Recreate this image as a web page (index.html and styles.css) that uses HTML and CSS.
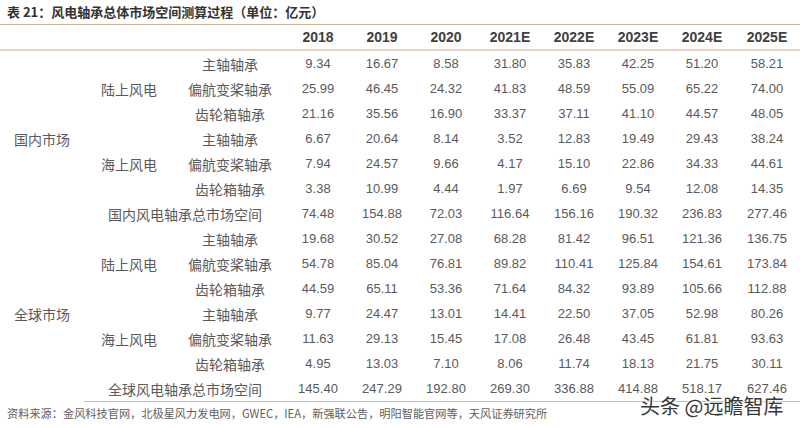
FILE: index.html
```html
<!DOCTYPE html>
<html lang="zh">
<head>
<meta charset="utf-8">
<title>风电轴承总体市场空间测算过程</title>
<link rel="stylesheet" href="styles.css">
</head>
<body>
<div class="page">
  <div class="title">表 21：风电轴承总体市场空间测算过程（单位：亿元）</div>
  <table class="data">
    <colgroup>
      <col class="c-region"><col class="c-type"><col class="c-item">
      <col class="c-num"><col class="c-num"><col class="c-num"><col class="c-num">
      <col class="c-num"><col class="c-num"><col class="c-num"><col class="c-last">
    </colgroup>
    <thead>
      <tr>
        <th></th><th></th><th></th>
        <th>2018</th><th>2019</th><th>2020</th><th>2021E</th><th>2022E</th><th>2023E</th><th>2024E</th><th>2025E</th>
      </tr>
    </thead>
    <tbody>
      <tr>
        <td class="region" rowspan="7">国内市场</td>
        <td class="type" rowspan="3">陆上风电</td>
        <td class="item">主轴轴承</td>
        <td>9.34</td><td>16.67</td><td>8.58</td><td>31.80</td><td>35.83</td><td>42.25</td><td>51.20</td><td>58.21</td>
      </tr>
      <tr>
        <td class="item">偏航变桨轴承</td>
        <td>25.99</td><td>46.45</td><td>24.32</td><td>41.83</td><td>48.59</td><td>55.09</td><td>65.22</td><td>74.00</td>
      </tr>
      <tr>
        <td class="item">齿轮箱轴承</td>
        <td>21.16</td><td>35.56</td><td>16.90</td><td>33.37</td><td>37.11</td><td>41.10</td><td>44.57</td><td>48.05</td>
      </tr>
      <tr>
        <td class="type" rowspan="3">海上风电</td>
        <td class="item">主轴轴承</td>
        <td>6.67</td><td>20.64</td><td>8.14</td><td>3.52</td><td>12.83</td><td>19.49</td><td>29.43</td><td>38.24</td>
      </tr>
      <tr>
        <td class="item">偏航变桨轴承</td>
        <td>7.94</td><td>24.57</td><td>9.66</td><td>4.17</td><td>15.10</td><td>22.86</td><td>34.33</td><td>44.61</td>
      </tr>
      <tr>
        <td class="item">齿轮箱轴承</td>
        <td>3.38</td><td>10.99</td><td>4.44</td><td>1.97</td><td>6.69</td><td>9.54</td><td>12.08</td><td>14.35</td>
      </tr>
      <tr>
        <td class="item" colspan="2">国内风电轴承总市场空间</td>
        <td>74.48</td><td>154.88</td><td>72.03</td><td>116.64</td><td>156.16</td><td>190.32</td><td>236.83</td><td>277.46</td>
      </tr>
      <tr>
        <td class="region" rowspan="7">全球市场</td>
        <td class="type" rowspan="3">陆上风电</td>
        <td class="item">主轴轴承</td>
        <td>19.68</td><td>30.52</td><td>27.08</td><td>68.28</td><td>81.42</td><td>96.51</td><td>121.36</td><td>136.75</td>
      </tr>
      <tr>
        <td class="item">偏航变桨轴承</td>
        <td>54.78</td><td>85.04</td><td>76.81</td><td>89.82</td><td>110.41</td><td>125.84</td><td>154.61</td><td>173.84</td>
      </tr>
      <tr>
        <td class="item">齿轮箱轴承</td>
        <td>44.59</td><td>65.11</td><td>53.36</td><td>71.64</td><td>84.32</td><td>93.89</td><td>105.66</td><td>112.88</td>
      </tr>
      <tr>
        <td class="type" rowspan="3">海上风电</td>
        <td class="item">主轴轴承</td>
        <td>9.77</td><td>24.47</td><td>13.01</td><td>14.41</td><td>22.50</td><td>37.05</td><td>52.98</td><td>80.26</td>
      </tr>
      <tr>
        <td class="item">偏航变桨轴承</td>
        <td>11.63</td><td>29.13</td><td>15.45</td><td>17.08</td><td>26.48</td><td>43.45</td><td>61.81</td><td>93.63</td>
      </tr>
      <tr>
        <td class="item">齿轮箱轴承</td>
        <td>4.95</td><td>13.03</td><td>7.10</td><td>8.06</td><td>11.74</td><td>18.13</td><td>21.75</td><td>30.11</td>
      </tr>
      <tr class="last">
        <td class="item" colspan="2">全球风电轴承总市场空间</td>
        <td>145.40</td><td>247.29</td><td>192.80</td><td>269.30</td><td>336.88</td><td>414.88</td><td>518.17</td><td>627.46</td>
      </tr>
    </tbody>
  </table>
  <div class="source">资料来源：金风科技官网，北极星风力发电网，GWEC，IEA，新强联公告，明阳智能官网等，天风证券研究所</div>
  <div class="watermark">头条 @远瞻智库</div>
</div>
</body>
</html>
```

FILE: styles.css
```css
html, body {
  margin: 0;
  padding: 0;
  background: #ffffff;
}

body {
  font-family: "Liberation Sans", "Noto Sans CJK SC", sans-serif;
  color: #595959;
}

.page {
  position: relative;
  width: 800px;
  height: 428px;
  overflow: hidden;
}

.title {
  height: 24px;
  line-height: 24px;
  padding-left: 7px;
  font-size: 13px;
  font-weight: bold;
  color: #333333;
  font-family: "Noto Sans CJK SC", sans-serif;
}

.data {
  width: 800px;
  table-layout: fixed;
  border-collapse: collapse;
  border-top: 1px solid #d4b394;
}

.c-region { width: 84px; }
.c-type { width: 90px; }
.c-item { width: 112px; }
.c-num { width: 64px; }
.c-last { width: 66px; }

.data th {
  height: 24px;
  padding: 0;
  font-size: 14px;
  font-weight: bold;
  color: #404040;
  text-align: center;
  border-bottom: 2px solid #ecd2bc;
}

.data td {
  height: 25px;
  padding: 0;
  font-size: 13px;
  text-align: center;
  white-space: nowrap;
  color: #5a5a5a;
}

.data td.region,
.data td.type,
.data td.item {
  font-family: "Noto Sans CJK SC", sans-serif;
  font-size: 14px;
}

.data tr.last td {
  border-bottom: 1px solid #e2b992;
}

.source {
  padding-left: 7px;
  line-height: 22px;
  font-size: 11.2px;
  color: #5e5e5e;
  font-family: "Noto Sans CJK SC", sans-serif;
}

.watermark {
  position: absolute;
  left: 640px;
  top: 393px;
  font-size: 20px;
  line-height: 26px;
  color: #383838;
  font-family: "Noto Sans CJK SC", sans-serif;
  text-shadow: 0 0 2px #ffffff, 0 0 2px #ffffff, 0 0 3px #ffffff;
}
```
